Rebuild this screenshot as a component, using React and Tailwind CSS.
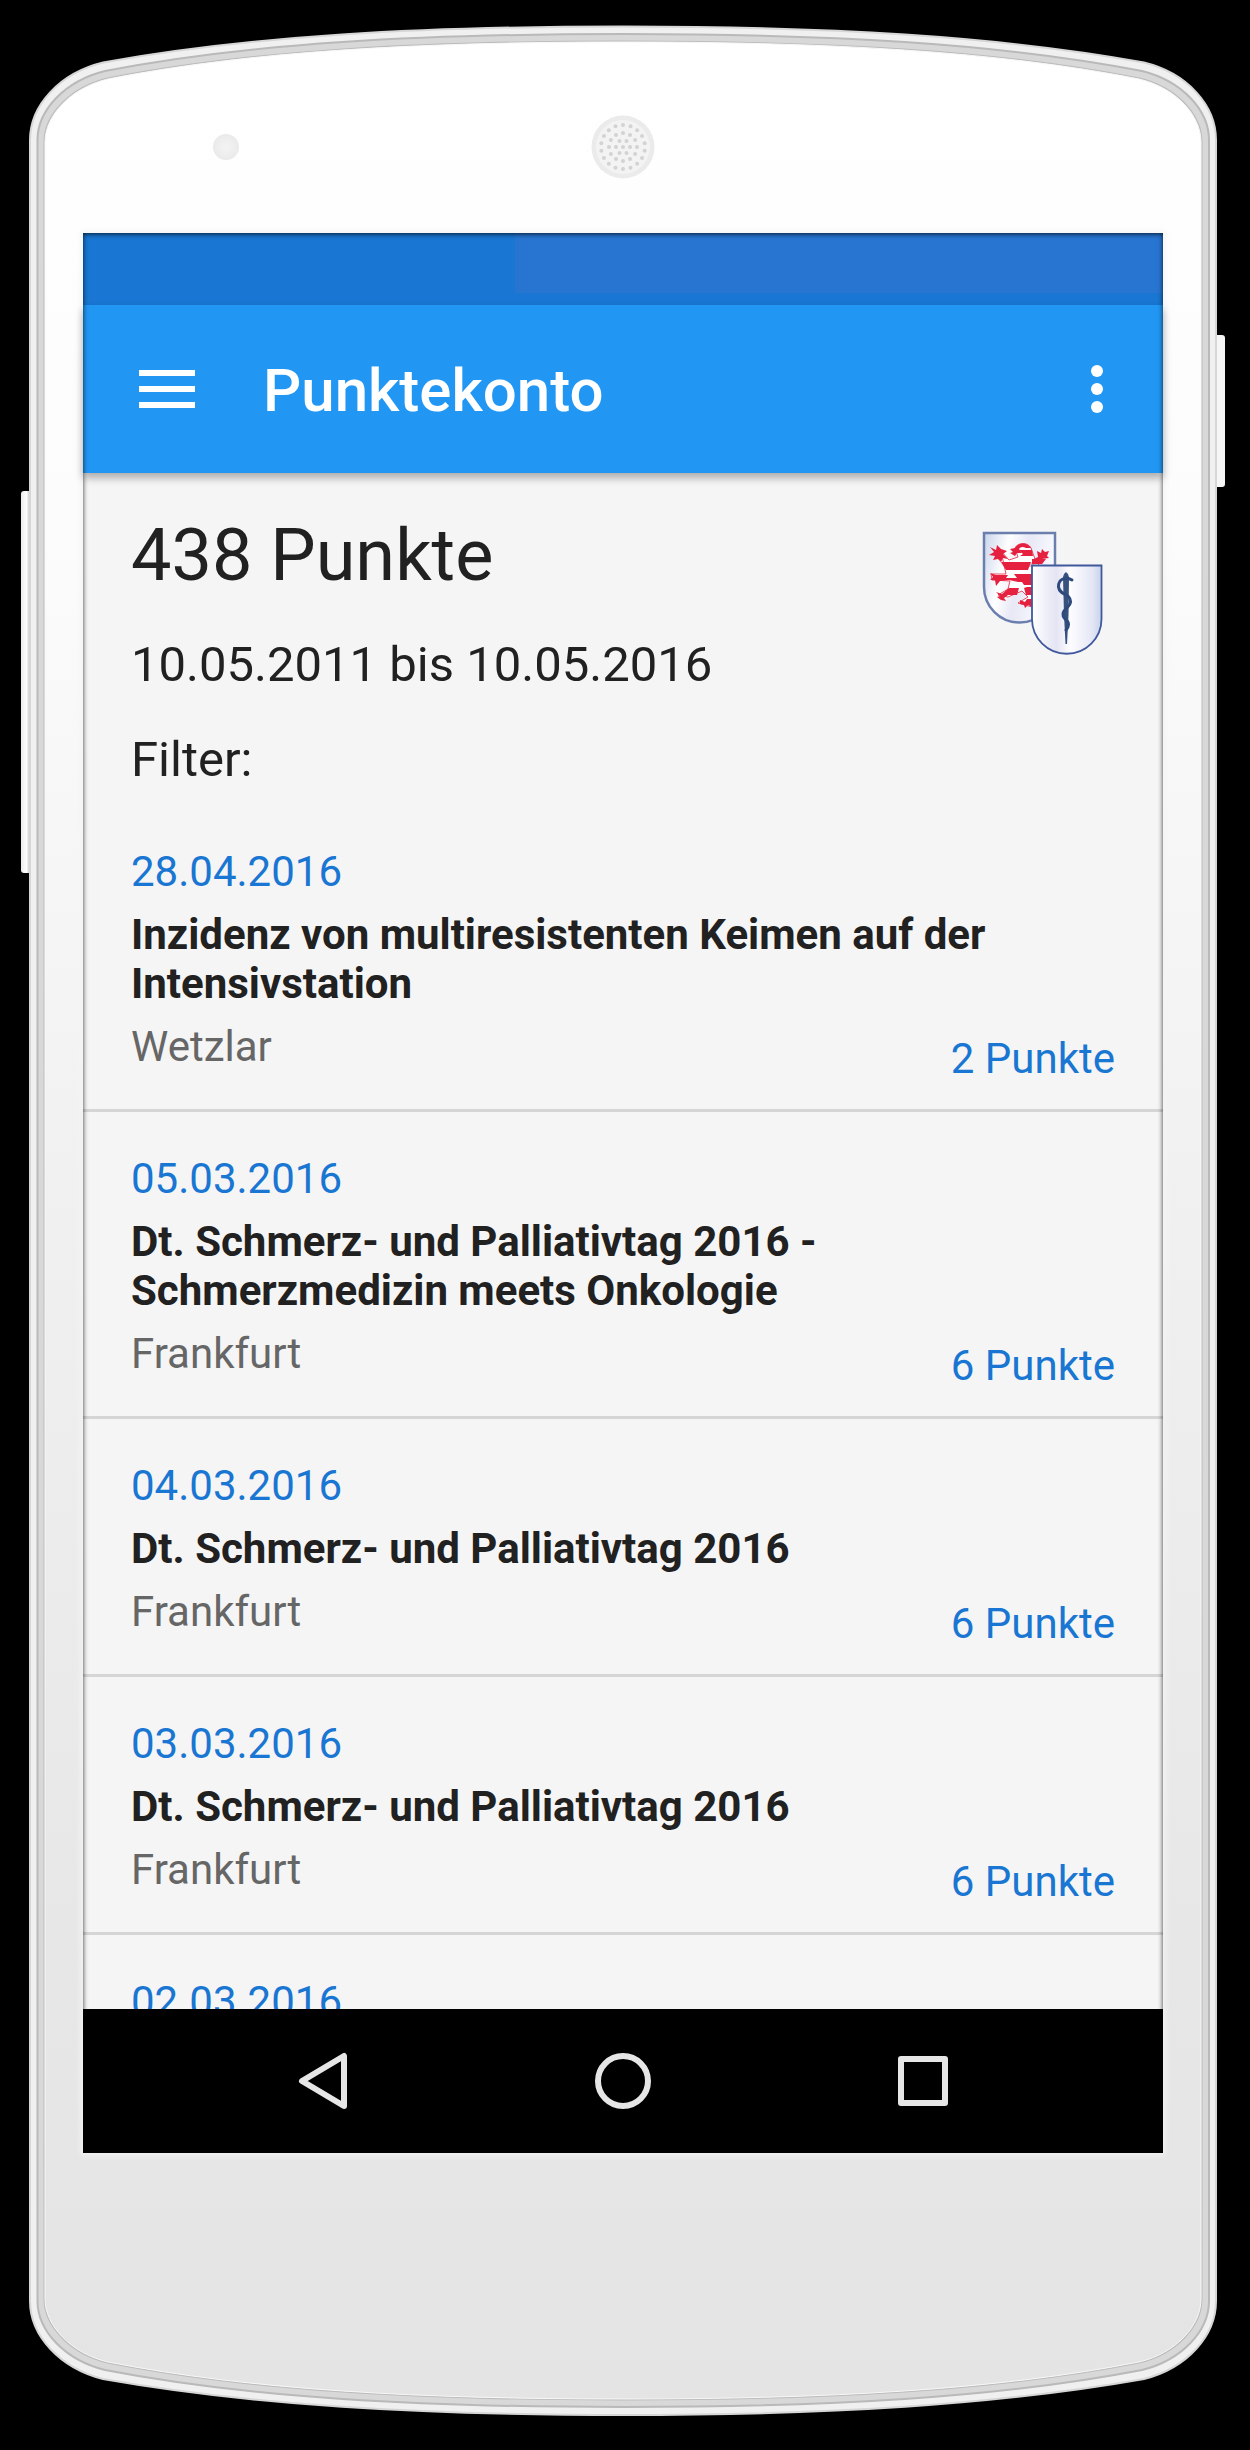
import React from 'react';

const events = [
    { date: '28.04.2016', title: 'Inzidenz von multiresistenten Keimen auf der Intensivstation', city: 'Wetzlar', points: 2 },
    { date: '05.03.2016', title: 'Dt. Schmerz- und Palliativtag 2016 - Schmerzmedizin meets Onkologie', city: 'Frankfurt', points: 6 },
    { date: '04.03.2016', title: 'Dt. Schmerz- und Palliativtag 2016', city: 'Frankfurt', points: 6 },
    { date: '03.03.2016', title: 'Dt. Schmerz- und Palliativtag 2016', city: 'Frankfurt', points: 6 },
    { date: '02.03.2016' },
];

// rings of speaker holes: [radius, count, start angle]
const holeRings = [
    [0, 1, 0],
    [7, 6, 0],
    [14, 12, 0],
    [22, 18, 10],
];

const FACE =
    'M45 142C45 116 70 88 108 79C250 51 420 42 623.5 42S997 51 1139 79C1177 88 1201 116 1201 142V2299C1201 2325 1177 2353 1139 2362C997 2390 827 2399 623.5 2399S250 2390 108 2362C70 2353 45 2325 45 2299Z';

const DeviceBody = () => (
    <svg className="absolute inset-0 h-full w-full" viewBox="0 0 1250 2450" preserveAspectRatio="none" aria-hidden="true">
        <defs>
            <linearGradient id="face" x1="0" y1="0" x2="0" y2="1">
                <stop offset="0" stopColor="#ffffff" />
                <stop offset="0.2" stopColor="#fcfcfc" />
                <stop offset="0.5" stopColor="#f0f0f0" />
                <stop offset="0.8" stopColor="#e7e7e7" />
                <stop offset="1" stopColor="#e4e4e4" />
            </linearGradient>
            <linearGradient id="key" x1="0" y1="0" x2="1" y2="0">
                <stop offset="0" stopColor="#ebebeb" />
                <stop offset="0.4" stopColor="#ffffff" />
                <stop offset="0.6" stopColor="#c8c8c8" />
            </linearGradient>
        </defs>
        <rect x="21" y="491" width="14" height="382" rx="3" fill="url(#key)" />
        <rect x="1211" y="335" width="14" height="152" rx="3" fill="#f6f6f6" />
        <path
            d="M30 140C30 105 60 73 103 62.5C250 36 420 26.5 623.5 26.5S997 36 1144 62.5C1187 73 1216 105 1216 140V2301C1216 2336 1187 2368 1144 2379C997 2405 827 2415 623.5 2415S250 2405 103 2379C60 2368 30 2336 30 2301Z"
            fill="#f0f0f0"
            stroke="#d6d6d6"
            strokeWidth="2"
        />
        <path
            d="M37.5 140C37.5 110 65 81 105 71C250 43 420 34 623.5 34S997 43 1142 71C1182 81 1209 110 1209 140V2301C1209 2331 1182 2360 1142 2370C997 2398 827 2407 623.5 2407S250 2398 105 2370C65 2360 37.5 2331 37.5 2301Z"
            fill="#d8d8d8"
            stroke="#b9b9b9"
            strokeWidth="2"
        />
        <path d={FACE} fill="none" stroke="#bcbcbc" strokeWidth="3" />
        <path d={FACE} fill="url(#face)" stroke="#f8f8f8" strokeWidth="1" />
    </svg>
);

const Speaker = () => (
    <svg className="h-16 w-16" viewBox="-32 -32 64 64" aria-hidden="true">
        <circle r="31.5" fill="#ebebeb" />
        <circle r="27" fill="#f3f3f3" />
        {holeRings.map(([radius, count, start], ring) =>
            Array.from({ length: count }, (_, i) => {
                const angle = ((start + (i * 360) / count) * Math.PI) / 180;
                return <circle key={`${ring}-${i}`} cx={radius * Math.cos(angle)} cy={radius * Math.sin(angle)} r="2" fill="#d3d3d3" />;
            })
        )}
    </svg>
);

const Crest = () => (
    <svg className="h-[125px] w-[121px] shrink-0" viewBox="0 0 121 125" role="img" aria-label="Landesärztekammer Hessen">
        <defs>
            <linearGradient id="shield" x1="0" y1="0" x2="1" y2="0.3">
                <stop offset="0" stopColor="#c9d3ea" />
                <stop offset="0.35" stopColor="#ffffff" />
                <stop offset="0.6" stopColor="#e8e8f6" />
                <stop offset="1" stopColor="#fafaff" />
            </linearGradient>
            <linearGradient id="shieldFront" x1="0" y1="0" x2="1" y2="0">
                <stop offset="0" stopColor="#ffffff" />
                <stop offset="0.35" stopColor="#e4e4f4" />
                <stop offset="0.55" stopColor="#fdfdff" />
                <stop offset="0.85" stopColor="#e6e8f6" />
                <stop offset="1" stopColor="#c9d3ea" />
            </linearGradient>
        </defs>
        <path d="M2 2H73V56A35.5 35.5 0 0 1 2 56Z" fill="url(#shield)" stroke="#6b7fae" strokeWidth="2.5" />
        {/* white body of the lion, the red bars lie on top */}
        <path
            d="M19 20L27 29L36 26L33 17C36 11 46 11 49 17L53 28L61 29L50 40V76L36 72L46 66L40 60L26 66L16 64L26 58L28 50L10 49L9 43L24 43Z"
            fill="#ffffff"
            stroke="#e6213f"
            strokeWidth="0.8"
        />
        <g fill="#e6213f">
            <path d="M8 16L14 19L15 14L19 18L25 20L21 23L26 28L21 27L19 31L16 28L11 29L13 25L7 24L12 21Z" />
            <path d="M33 17C36 11 46 11 49 17L44 17C41 15 38 16 37 18L40 22L35 22L33 25L28 22L31 21L28 18Z" />
            <path d="M37 19H50L51 25H38L41 23Z" />
            <path d="M55 20L59 22L60 18L63 21L67 20L65 25L67 27L60 28L56 31L50 32L52 28L56 26Z" />
            <path d="M17 29L20 34L28 34H47L51 30L63 29L60 33H53L49 36H22Z" fillOpacity="0.35" />
            <path d="M19 31H49L46 39H24Z" />
            <path d="M50 28H64L60 33H50Z" />
            <path d="M8 42L14 44H26L24 47H35L32 43H50V51H36L27 49L18 50L14 55L13 49L8 49L11 46Z" />
            <path d="M40 51H50V54H42Z" />
            <path d="M27 57H37L35 64L26 64L22 67L24 70L19 69L15 66L18 65L14 61L20 63Z" />
            <path d="M42 57L45 56H50V64H44Z" />
            <path d="M38 69L43 71L45 68H50V76L46 74L43 77L42 74L38 73Z" />
        </g>
        <path d="M50 34.5H119.5V88A34.75 34.75 0 0 1 50 88Z" fill="url(#shieldFront)" stroke="#40599c" strokeWidth="1.8" />
        <path d="M81 46L82 43L84 41L86 43L87 46L86.5 84L85 113H83.5L82 84Z" fill="#37527f" />
        <path d="M90 49C84 45 76 48 76.5 56C77 61 82 63 86 65C90 69 89 73 85 77C80 81 80 85 83 88C88 91 87 96 84 99" fill="none" stroke="#2f4b7c" strokeWidth="3" strokeLinecap="round" />
    </svg>
);

const EventRow = ({ event }) => (
    <li className="border-b-3 border-[#d5d5d5] px-12 pt-[42px] pb-[26px] text-[42px] leading-[49px]">
        <p className="text-[#1976d2]">{event.date}</p>
        {event.title && (
            <>
                <h2 className="mt-3.5 max-w-[880px] font-bold text-[#212121]">{event.title}</h2>
                <div className="mt-3.5 flex items-start justify-between">
                    <span className="text-[#666666]">{event.city}</span>
                    <span className="pt-3 text-[#1976d2]">{event.points} Punkte</span>
                </div>
            </>
        )}
    </li>
);

const App = () => (
    <div className="relative flex h-screen flex-col bg-black pr-[87px] pb-[297px] pl-[83px] font-['Roboto',sans-serif]">
        <DeviceBody />

        <div className="relative grid h-[233px] shrink-0 grid-cols-[1fr_auto_1fr] items-center pt-[61px]">
            <span className="ml-[130px] h-[26px] w-[26px] rounded-full bg-radial from-[#f4f4f4] to-[#e6e6e6]" />
            <Speaker />
        </div>

        <div className="relative flex min-h-0 flex-1 flex-col bg-[#f5f5f5] shadow-[0_0_6px_2px_#f4f4f4]">
            <div className="flex h-[72px] shrink-0 bg-[#1976d2] pb-3">
                <div className="ml-[40%] flex-1 bg-[#2775d1]" />
            </div>

            <header className="z-10 flex h-[168px] shrink-0 items-center bg-[#2196f3] px-14 text-white shadow-[0_5px_8px_rgba(0,0,0,0.3)]">
                <button aria-label="Menü öffnen">
                    <svg className="h-[38px] w-14" viewBox="0 0 56 38" fill="currentColor">
                        <path d="M0 0H56V6H0ZM0 16H56V22H0ZM0 32H56V38H0Z" />
                    </svg>
                </button>
                <h1 className="ml-[68px] flex-1 pt-1 text-[60px] leading-[72px] font-medium">Punktekonto</h1>
                <button aria-label="Weitere Optionen">
                    <svg className="h-[54px] w-5" viewBox="0 0 20 54" fill="currentColor">
                        <circle cx="10" cy="9" r="6" />
                        <circle cx="10" cy="27" r="6" />
                        <circle cx="10" cy="45" r="6" />
                    </svg>
                </button>
            </header>

            <main className="min-h-0 flex-1 overflow-hidden">
                <section className="flex justify-between px-12 pt-[41px] text-[49px] leading-14 text-[#212121]">
                    <div>
                        <p className="text-7xl leading-[84px]">438 Punkte</p>
                        <p className="mt-[39px]">10.05.2011 bis 10.05.2016</p>
                        <p className="mt-[39px]">Filter:</p>
                    </div>
                    <div className="pt-[17px] pr-3">
                        <Crest />
                    </div>
                </section>
                <ul className="mt-[17px]">
                    {events.map((event) => (
                        <EventRow key={event.date} event={event} />
                    ))}
                </ul>
            </main>

            <nav className="flex h-36 shrink-0 items-center justify-center gap-60 bg-black text-[#e6e6e6]">
                <button aria-label="Zurück">
                    <svg className="h-[60px] w-[60px]" viewBox="0 0 60 60" fill="none" stroke="currentColor" strokeWidth="6" strokeLinejoin="round">
                        <path d="M51 5V55L9 30Z" />
                    </svg>
                </button>
                <button aria-label="Startbildschirm">
                    <svg className="h-[60px] w-[60px]" viewBox="0 0 60 60" fill="none" stroke="currentColor" strokeWidth="6">
                        <circle cx="30" cy="30" r="25" />
                    </svg>
                </button>
                <button aria-label="Letzte Apps">
                    <svg className="h-[60px] w-[60px]" viewBox="0 0 60 60" fill="none" stroke="currentColor" strokeWidth="6" strokeLinejoin="round">
                        <path d="M8 8H52V52H8Z" />
                    </svg>
                </button>
            </nav>

            <div className="pointer-events-none absolute inset-0 z-20 shadow-[inset_0_1px_5px_rgba(0,0,0,0.8)]" />
        </div>
    </div>
);

export default App;
